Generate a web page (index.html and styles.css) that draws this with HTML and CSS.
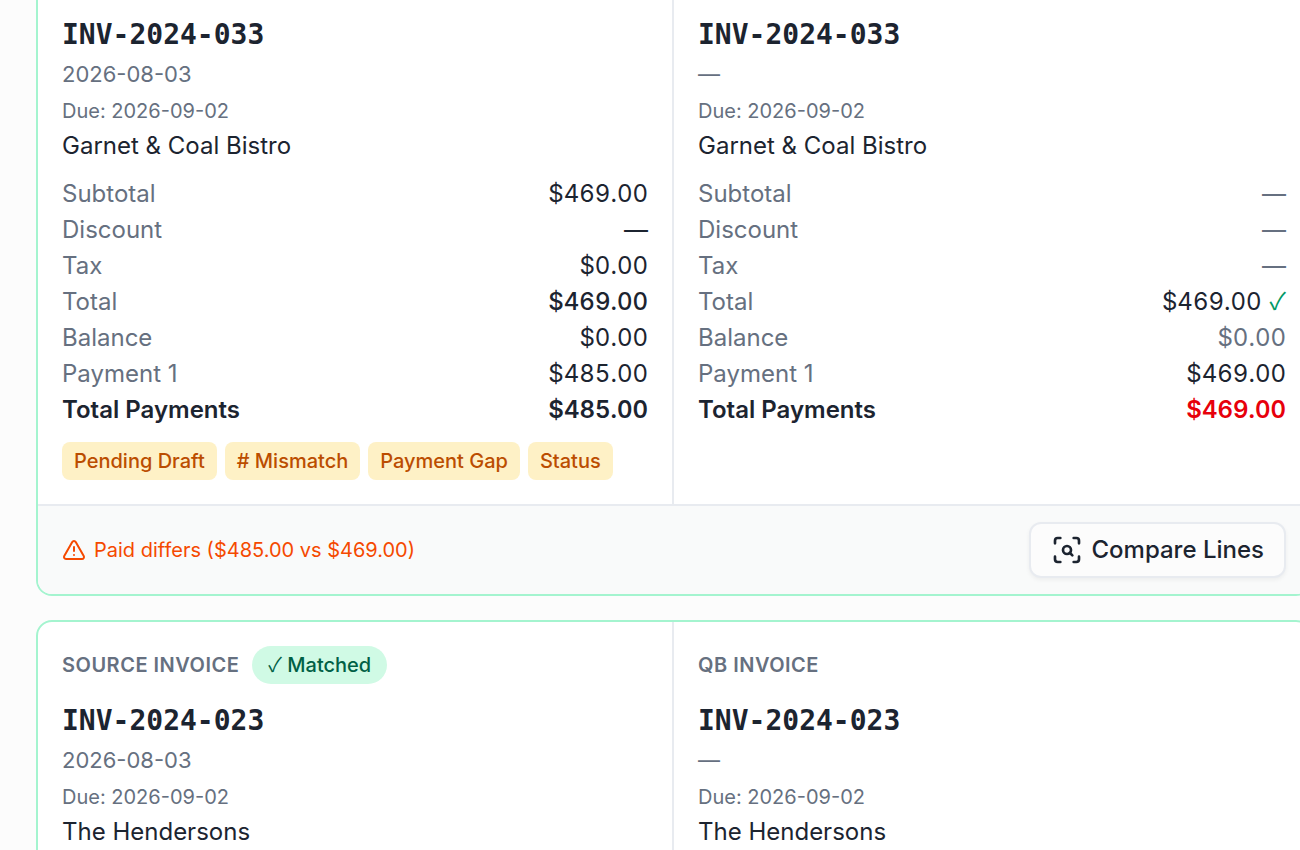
FILE: index.html
```html
<!DOCTYPE html>
<html lang="en">
<head>
  <meta charset="UTF-8">
  <meta name="viewport" content="width=device-width, initial-scale=1.0">
  <title>Invoice Matching</title>
  <link rel="stylesheet" href="styles.css">
</head>
<body>
  <main class="matches">

    <!-- INV-2024-033 -->
    <article class="match-card scrolled">
      <div class="sides">
        <section class="side">
          <h2 class="number">INV-2024-033</h2>
          <p class="date">2026-08-03</p>
          <p class="due">Due: 2026-09-02</p>
          <p class="customer">Garnet &amp; Coal Bistro</p>
          <dl class="amounts">
            <div class="row"><dt>Subtotal</dt><dd>$469.00</dd></div>
            <div class="row"><dt>Discount</dt><dd>—</dd></div>
            <div class="row"><dt>Tax</dt><dd>$0.00</dd></div>
            <div class="row"><dt>Total</dt><dd class="medium">$469.00</dd></div>
            <div class="row"><dt>Balance</dt><dd>$0.00</dd></div>
            <div class="row"><dt>Payment 1</dt><dd>$485.00</dd></div>
            <div class="row total"><dt>Total Payments</dt><dd>$485.00</dd></div>
          </dl>
          <div class="flags">
            <span class="flag">Pending Draft</span>
            <span class="flag"># Mismatch</span>
            <span class="flag">Payment Gap</span>
            <span class="flag">Status</span>
          </div>
        </section>
        <section class="side">
          <h2 class="number">INV-2024-033</h2>
          <p class="date">—</p>
          <p class="due">Due: 2026-09-02</p>
          <p class="customer">Garnet &amp; Coal Bistro</p>
          <dl class="amounts">
            <div class="row"><dt>Subtotal</dt><dd class="muted">—</dd></div>
            <div class="row"><dt>Discount</dt><dd class="muted">—</dd></div>
            <div class="row"><dt>Tax</dt><dd class="muted">—</dd></div>
            <div class="row"><dt>Total</dt><dd class="checked">$469.00 <span class="check ok">✓</span></dd></div>
            <div class="row"><dt>Balance</dt><dd class="muted">$0.00</dd></div>
            <div class="row"><dt>Payment 1</dt><dd>$469.00</dd></div>
            <div class="row total"><dt>Total Payments</dt><dd class="bad">$469.00</dd></div>
          </dl>
        </section>
      </div>
      <footer class="card-footer">
        <p class="warning">
          <svg class="warning-icon" viewBox="0 0 24 24" aria-hidden="true">
            <path d="m21.73 18-8-14a2 2 0 0 0-3.48 0l-8 14A2 2 0 0 0 4 21h16a2 2 0 0 0 1.73-3"/>
            <path d="M12 9v4"/>
            <path d="M12 17h.01"/>
          </svg>
          Paid differs ($485.00 vs $469.00)
        </p>
        <button type="button" class="compare">
          <svg class="compare-icon" viewBox="0 0 24 24" aria-hidden="true">
            <path d="M3 7V5a2 2 0 0 1 2-2h2"/>
            <path d="M17 3h2a2 2 0 0 1 2 2v2"/>
            <path d="M21 17v2a2 2 0 0 1-2 2h-2"/>
            <path d="M7 21H5a2 2 0 0 1-2-2v-2"/>
            <circle cx="12" cy="12" r="3"/>
            <path d="m16 16-1.9-1.9"/>
          </svg>
          Compare Lines
        </button>
      </footer>
    </article>

    <!-- INV-2024-023 -->
    <article class="match-card">
      <div class="sides">
        <section class="side">
          <div class="side-head">
            <span class="side-label">SOURCE INVOICE</span>
            <span class="status"><span class="check">✓</span> Matched</span>
          </div>
          <h2 class="number">INV-2024-023</h2>
          <p class="date">2026-08-03</p>
          <p class="due">Due: 2026-09-02</p>
          <p class="customer">The Hendersons</p>
        </section>
        <section class="side">
          <div class="side-head">
            <span class="side-label">QB INVOICE</span>
          </div>
          <h2 class="number">INV-2024-023</h2>
          <p class="date">—</p>
          <p class="due">Due: 2026-09-02</p>
          <p class="customer">The Hendersons</p>
        </section>
      </div>
    </article>

  </main>
</body>
</html>
```
FILE: styles.css
```css
* { box-sizing: border-box; margin: 0; padding: 0; }
body {
  height: 100vh;
  overflow: hidden;
  background: #fcfcfc;
  color: #1c2430;
  font-family: Inter, "Liberation Sans", sans-serif;
  font-size: 24px;
  line-height: 36px;
}

/* Card list, runs a little past the right edge */
.matches {
  display: flex;
  flex-direction: column;
  gap: 24px;
  margin-left: 36px;
  margin-right: -12px;
}
.match-card {
  background: #fff;
  border: 2px solid #a4f4cf;
  border-radius: 16px;
  overflow: hidden;
}
.match-card.scrolled {
  border-top: none;
  border-top-left-radius: 0;
  border-top-right-radius: 0;
}
.sides {
  display: grid;
  grid-template-columns: 1fr 1fr;
}
.side { padding: 24px; }
.side:first-child { border-right: 2px solid #e8ebf0; }
.scrolled .side { padding-top: 14px; }

/* Invoice header */
.side-head {
  display: flex;
  align-items: center;
  gap: 13px;
  height: 38px;
  margin-bottom: 16px;
}
.side-label {
  color: #667080;
  font-size: 20px;
  font-weight: 600;
  letter-spacing: 0.5px;
}
.status {
  padding: 4px 16px;
  border-radius: 20px;
  background: #d0fae5;
  color: #006045;
  font-size: 20px;
  font-weight: 500;
  line-height: 30px;
}
.check {
  font-family: "Noto Sans CJK SC", sans-serif;
  font-weight: 400;
  line-height: 1;
}
.number {
  font-family: "DejaVu Sans Mono", monospace;
  font-size: 28px;
  font-weight: 700;
  line-height: 42px;
}
.date {
  margin-top: 2px;
  color: #667080;
  font-size: 22px;
  line-height: 32px;
}
.due {
  margin-top: 6px;
  color: #667080;
  font-size: 20px;
  line-height: 30px;
}
.customer { margin-top: 2px; }

/* Amounts */
.amounts { margin-top: 12px; }
.row {
  display: flex;
  justify-content: space-between;
}
.row dt { color: #667080; }
.row dd { font-variant-numeric: tabular-nums; }
.row .medium { font-weight: 500; }
.row .muted { color: #667080; }
.row .checked {
  display: flex;
  align-items: baseline;
  gap: 8px;
}
.row.total, .row.total dt {
  color: #1c2430;
  font-weight: 600;
}
.row .ok { color: #009966; }
.row .bad { color: #e7000b; }

.flags {
  display: flex;
  gap: 8px;
  margin-top: 14px;
}
.flag {
  padding: 4px 12px;
  border-radius: 8px;
  background: #fef1c6;
  color: #bb4d00;
  font-size: 20px;
  font-weight: 500;
  line-height: 30px;
}

/* Card footer */
.card-footer {
  display: flex;
  justify-content: space-between;
  align-items: center;
  padding: 16px 24px;
  border-top: 2px solid #e8ebf0;
  background: #f9fafa;
}
.warning {
  display: flex;
  align-items: center;
  gap: 8px;
  color: #f54900;
  font-size: 20px;
}
.warning-icon, .compare-icon {
  fill: none;
  stroke: currentColor;
  stroke-width: 2;
  stroke-linecap: round;
  stroke-linejoin: round;
}
.warning-icon { width: 24px; height: 24px; }
.compare-icon { width: 32px; height: 32px; }
.compare {
  display: flex;
  align-items: center;
  gap: 8px;
  height: 56px;
  padding: 0 20px;
  border: 2px solid #e8ebf0;
  border-radius: 12px;
  background: #fcfcfc;
  box-shadow: 0 2px 4px rgba(0, 0, 0, 0.05);
  color: #1c2430;
  font-family: inherit;
  font-size: 24px;
  font-weight: 500;
  line-height: 36px;
  cursor: pointer;
}
.compare:hover { background: #f3f4f6; }
```
